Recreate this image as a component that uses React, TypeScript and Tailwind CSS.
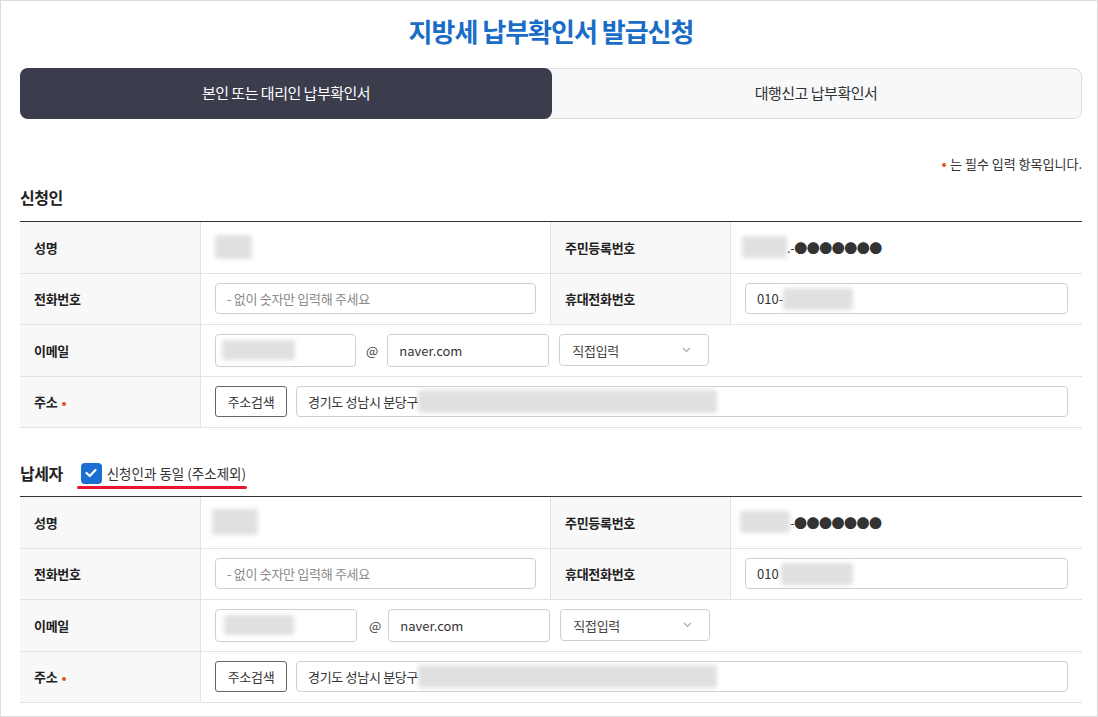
import React from "react";

function Blur({ cls }: { cls: string }) {
  return <span className={"inline-block rounded-[2px] bg-[#d4d4d4] opacity-70 blur-[2px] " + cls} />;
}

function Th({ children, req }: { children: React.ReactNode; req?: boolean }) {
  return (
    <div className="flex items-center border-r border-[#e3e3e3] bg-[#f8f8f8] pl-[14px] text-[13px] font-bold tracking-[-0.3px] text-[#222]">
      {children}
      {req && <span className="ml-[5px] mt-[4px] inline-block h-[4px] w-[4px] rounded-full bg-[#e2541d]" />}
    </div>
  );
}

function Td({ children, cls = "" }: { children?: React.ReactNode; cls?: string }) {
  return <div className={"flex items-center px-[14px] text-[13px] text-[#333] " + cls}>{children}</div>;
}

function Field({ children, cls = "" }: { children?: React.ReactNode; cls?: string }) {
  return (
    <div className={"flex items-center rounded-[4px] border border-[#cfcfcf] bg-white px-[11px] text-[13px] text-[#333] " + cls}>
      {children}
    </div>
  );
}

function Row({ children }: { children: React.ReactNode }) {
  return <div className="grid h-[51.5px] grid-cols-[181px_350px_180px_1fr] border-b border-[#e3e3e3]">{children}</div>;
}

function Chevron() {
  return (
    <svg width="9" height="6" viewBox="0 0 9 6" className="ml-auto mr-[6px]">
      <polyline points="1,1 4.5,4.5 8,1" fill="none" stroke="#aaa" strokeWidth="1.2" />
    </svg>
  );
}

function Table({ second }: { second?: boolean }) {
  return (
    <div className="border-t border-[#333]">
      <Row>
        <Th>성명</Th>
        <Td cls="border-r border-[#e3e3e3]">
          <Blur cls={second ? "ml-[-3px] h-[26px] w-[46px]" : "h-[24px] w-[37px]"} />
        </Td>
        <Th>주민등록번호</Th>
        <Td>
          <Blur cls={second ? "ml-[-5px] h-[22px] w-[50px]" : "ml-[-3px] h-[22px] w-[45px]"} />
          <span className="tracking-[-0.5px] text-[#333]">{second ? "" : "."}-●●●●●●●</span>
        </Td>
      </Row>
      <Row>
        <Th>전화번호</Th>
        <Td cls="border-r border-[#e3e3e3]">
          <Field cls="h-[31px] w-full">
            <span className="tracking-[-0.3px] text-[#8a8a8a]">- 없이 숫자만 입력해 주세요</span>
          </Field>
        </Td>
        <Th>휴대전화번호</Th>
        <Td>
          <Field cls="h-[31px] w-full">
            <span>{second ? "010" : "010-"}</span>
            <Blur cls={second ? "ml-[2px] h-[22px] w-[72px]" : "h-[22px] w-[70px]"} />
          </Field>
        </Td>
      </Row>
      <Row>
        <Th>이메일</Th>
        <Td cls="col-span-3">
          <Field cls={second ? "h-[33px] w-[142px]" : "h-[33px] w-[141px]"}>
            <Blur cls={second ? "ml-[-3px] h-[20px] w-[70px]" : "ml-[-5px] h-[20px] w-[73px]"} />
          </Field>
          <span className={second ? "ml-[12px] mr-[7px] text-[#444]" : "ml-[10px] mr-[9px] text-[#444]"}>@</span>
          <Field cls="h-[33px] w-[162px]">
            <span className="text-[#333]">naver.com</span>
          </Field>
          <Field cls="ml-[10px] h-[32px] w-[150px] pl-[12px]">
            <span className="tracking-[-0.3px] text-[#444]">직접입력</span>
            <Chevron />
          </Field>
        </Td>
      </Row>
      <Row>
        <Th req>주소</Th>
        <Td cls="col-span-3">
          <div className="flex h-[31px] w-[72px] shrink-0 items-center justify-center rounded-[3px] border border-[#666] bg-white text-[13px] tracking-[-0.3px] text-[#333]">
            주소검색
          </div>
          <Field cls="ml-[9px] h-[31px] flex-1 bg-[#f2f2f2] pl-[11px]">
            <span className="tracking-[-0.3px]">경기도 성남시 분당구</span>
            <Blur cls="h-[23px] w-[299px]" />
          </Field>
        </Td>
      </Row>
    </div>
  );
}

export default function App() {
  return (
    <div className="h-[717px] w-[1098px] overflow-hidden border border-[#dcdcdc] bg-white font-['Noto_Sans_CJK_KR','Noto_Sans',sans-serif] text-[#333]">
      <div className="ml-[19px] w-[1062px]">
        <h1 className="mt-[12px] text-center text-[26px] font-bold leading-[36px] tracking-[-1px] text-[#196dc6]">
          지방세 납부확인서 발급신청
        </h1>
        <div className="mt-[19px] flex h-[51px] rounded-[8px] border border-[#dedede] bg-[#f7f8fa] text-[15px] tracking-[-0.5px]">
          <div className="-m-px flex w-[532px] items-center justify-center rounded-[8px] bg-[#3b3c4c] text-white">
            본인 또는 대리인 납부확인서
          </div>
          <div className="flex flex-1 items-center justify-center text-[#333]">대행신고 납부확인서</div>
        </div>
        <div className="mt-[36px] flex items-center justify-end text-[13px] leading-[18px] text-[#333]">
          <span className="mr-[4px] mt-[2px] inline-block h-[4px] w-[4px] rounded-full bg-[#e2541d]" />
          는 필수 입력 항목입니다.
        </div>
        <h2 className="mt-[12px] text-[16px] font-bold leading-[24px] tracking-[-0.5px] text-[#222]">신청인</h2>
        <div className="mt-[12px]">
          <Table />
        </div>
        <div className="mt-[33px] flex h-[24px] items-center">
          <h2 className="text-[16px] font-bold leading-[24px] tracking-[-0.5px] text-[#222]">납세자</h2>
          <div className="relative ml-[18px] flex h-[22px] items-center">
            <span className="flex h-[21px] w-[21px] items-center justify-center rounded-[4px] bg-[#1b6fd2]">
              <svg width="12" height="10" viewBox="0 0 12 10">
                <polyline points="1.5,5 4.8,8 10.5,2" fill="none" stroke="#fff" strokeWidth="2.2" strokeLinecap="round" strokeLinejoin="round" />
              </svg>
            </span>
            <span className="ml-[5px] text-[13.5px] text-[#333]">신청인과 동일 (주소제외)</span>
            <span className="absolute left-[-4px] right-[-1px] top-[24px] h-[3px] rounded-full bg-[#ea1431]" />
          </div>
        </div>
        <div className="mt-[11px]">
          <Table second />
        </div>
      </div>
    </div>
  );
}
